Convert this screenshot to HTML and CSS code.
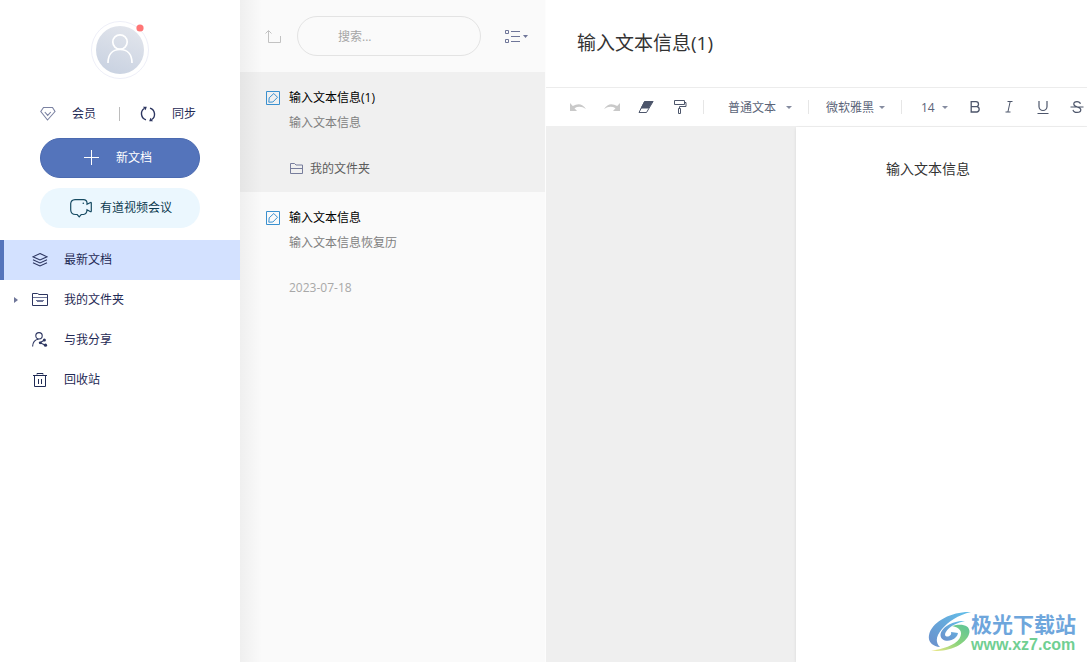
FILE: index.html
```html
<!DOCTYPE html>
<html lang="zh-CN">
<head>
<meta charset="utf-8">
<title>输入文本信息(1)</title>
<link rel="stylesheet" href="styles.css">
</head>
<body>
<div class="app">
  <aside class="sidebar">
    <button class="avatar" aria-label="账号">
      <svg width="58" height="58" viewBox="0 0 58 58">
        <defs><linearGradient id="face" x1=".7" y1="0" x2=".3" y2="1"><stop offset="0" stop-color="#e2e5ec"/><stop offset="1" stop-color="#c9d2e1"/></linearGradient></defs>
        <circle cx="29" cy="29" r="28.5" fill="#fff" stroke="#eeeff8"/>
        <circle cx="29" cy="29" r="24" fill="url(#face)"/>
        <circle cx="29" cy="21" r="7.2" fill="none" stroke="#fff" stroke-width="1.7"/>
        <path d="M17 42C17 34 21 28.5 29 28.5S41 34 41 42" fill="none" stroke="#fff" stroke-width="1.7"/>
        <circle cx="49" cy="7" r="3.6" fill="#ff7676"/>
      </svg>
    </button>
    <div class="account">
      <button class="account-item">
        <svg width="16" height="16" viewBox="0 0 16 16" fill="none" stroke="#7b82a2" stroke-width="1.1"><path d="M3.5 1.5h9l2.5 4-7.5 8.500L.8 5.500zM4.800 6l2.900 3.400L10.800 6"/></svg>
        会员
      </button>
      <span class="account-rule"></span>
      <button class="account-item">
        <svg width="16" height="16" viewBox="0 0 16 16" fill="none" stroke="#2c3560" stroke-width="1.4"><path d="M6 13.800A6.300 6.300 0 0 1 4.300 2.500M10 2.200a6.300 6.300 0 0 1 1.700 11.300"/><path d="M3 .8h3.800L5.600 4.200zM13 15.200H9.200l1.200-3.400z" fill="#2c3560" stroke="none"/></svg>
        同步
      </button>
    </div>
    <button class="pill pill-new">
      <svg width="16" height="16" viewBox="0 0 16 16" stroke="#fff" fill="none"><path d="M0 7.500h15M7.500 0v15"/></svg>
      新文档
    </button>
    <button class="pill pill-meet">
      <svg width="22" height="20" viewBox="0 0 22 20" fill="none" stroke="#174b63" stroke-width="1.2"><path d="M5 1.600h8.500a3.500 3.500 0 0 1 3.500 3.200v1.500l3.500-1.800q.8-.2.800.6v8q0 .8-.8.600l-3.500-1.900q-.2 4.500-3.500 4.700h-2.300L9.200 18.800 7.200 16.500H5.500Q1 16.500.700 12V5.500Q1 2 5 1.600z"/><circle cx="13.300" cy="5.200" r=".8" fill="#174b63" stroke="none"/></svg>
      有道视频会议
    </button>
    <nav class="nav">
      <a class="nav-item nav-active" href="#recent"><span class="twist"></span>
        <svg width="16" height="16" viewBox="0 0 16 16" fill="none" stroke="#2c3560" stroke-width="1.1"><path d="M8 1.500 15 4.800 8 8 1 4.800zM1 7.800 8 11l7-3.200M1 10.800 8 14l7-3.200"/></svg>最新文档</a>
      <a class="nav-item" href="#folders"><span class="twist twist-shown"></span>
        <svg width="16" height="16" viewBox="0 0 16 16" fill="none" stroke="#2c3560"><path d="M.5 13.500v-12h5l1.500 1h8.500v11z"/><path d="M1 5.500h14M4 8.500h8M5 9.500h6" stroke="#6f7699"/></svg>我的文件夹</a>
      <a class="nav-item" href="#shared"><span class="twist"></span>
        <svg width="16" height="16" viewBox="0 0 16 16" fill="none" stroke="#2c3560" stroke-width="1.1"><circle cx="7" cy="3.800" r="3.200"/><path d="M.6 14.500C.8 10.500 2.500 7.500 6.500 7.200M8 10.800l4.500-2.800M8 10.800l5.500 2.400" /><circle cx="8.200" cy="10.800" r="1.400" fill="#2c3560" stroke="none"/><circle cx="12.400" cy="8" r="1.500" fill="#2c3560" stroke="none"/><circle cx="13.500" cy="13.200" r="1.600" fill="#2c3560" stroke="none"/></svg>与我分享</a>
      <a class="nav-item" href="#trash"><span class="twist"></span>
        <svg width="16" height="16" viewBox="0 0 16 16" fill="none" stroke="#1f2a55"><path d="M1 3.500h14M5 2.500V1.500h6v1M2.500 4v10.500h11V4M6.500 7v5M9.500 7v5"/></svg>回收站</a>
    </nav>
  </aside>

  <section class="notes">
    <div class="notes-bar">
      <button class="icon-btn" aria-label="返回上级"><svg width="18" height="16" viewBox="0 0 18 16" fill="none" stroke="#c2c2c2"><path d="M1.500 5.500l3-3 3 3M4.500 3v11.500h12V8"/></svg></button>
      <input class="search" type="search" placeholder="搜索..." aria-label="搜索">
      <button class="icon-btn" aria-label="列表视图"><svg width="24" height="16" viewBox="0 0 24 16" fill="none" stroke="#6f7699"><path d="M.5 2.500h3v3h-3zM.5 11.500h3v3h-3zM6 3.500h9M6 8.500h9M6 13.500h9"/><path d="M18 7h5l-2.500 3z" fill="#6f7699" stroke="none"/></svg></button>
    </div>
    <article class="note note-active">
      <svg class="note-icon" width="14" height="14" viewBox="0 0 14 14" fill="none" stroke="#3a90cf"><path d="M.5.500h13v13H.5z"/><path d="M2.800 11.200l.4-4.400L7.800 2.500l3.700 3.800-4.600 4.700z"/></svg>
      <div class="note-body">
        <h2 class="note-title">输入文本信息(1)</h2>
        <p class="note-text">输入文本信息</p>
        <p class="note-foot note-folder"><svg width="14" height="12" viewBox="0 0 14 12" fill="none" stroke="#777d9c"><path d="M1.500 10.500V.500h4l1.500 1.500h6.500v8.500zM1.500 5.500h12"/></svg>我的文件夹</p>
      </div>
    </article>
    <article class="note">
      <svg class="note-icon" width="14" height="14" viewBox="0 0 14 14" fill="none" stroke="#3a90cf"><path d="M.5.500h13v13H.5z"/><path d="M2.800 11.200l.4-4.400L7.800 2.500l3.700 3.800-4.600 4.700z"/></svg>
      <div class="note-body">
        <h2 class="note-title">输入文本信息</h2>
        <p class="note-text">输入文本信息恢复历</p>
        <p class="note-foot">2023-07-18</p>
      </div>
    </article>
  </section>

  <main class="editor">
    <h1 class="doc-title">输入文本信息(1)</h1>
    <div class="toolbar">
      <button class="tool" aria-label="撤销"><svg width="18" height="16" viewBox="0 0 18 16"><path d="M1 4v8h7L5.500 9.200Q11 6 17 10 12 2.500 3.800 7z" fill="#c9c9c9"/></svg></button>
      <button class="tool" aria-label="重做"><svg width="18" height="16" viewBox="0 0 18 16"><path d="M17 4v8h-7l2.500-2.800Q7 6 1 10 6 2.500 14.200 7z" fill="#c9c9c9"/></svg></button>
      <button class="tool" aria-label="清除格式"><svg width="16" height="14" viewBox="0 0 16 14"><path d="M6.500 1H15.500l-5 7.500H2.500z" fill="#4d566b"/><path d="M6.500 1.500 1 12.500h7.500l6.500-11" fill="none" stroke="#4d566b"/></svg></button>
      <button class="tool" aria-label="格式刷"><svg width="14" height="16" viewBox="0 0 14 16" fill="none" stroke="#4d566b"><path d="M1.500 1.500h10v4h-10zM11.500 3.500h1.500v4H6.500v2M5.500 9.500h2v5h-2z"/></svg></button>
      <span class="rule rule-gap"></span>
      <div class="pick pick-style"><select aria-label="段落样式"><option>普通文本</option></select></div>
      <span class="rule"></span>
      <div class="pick pick-font"><select aria-label="字体"><option>微软雅黑</option></select></div>
      <span class="rule"></span>
      <div class="pick pick-size"><select aria-label="字号"><option>14</option></select></div>
      <button class="tool" aria-label="加粗"><svg width="12" height="14" viewBox="0 0 12 14" fill="none" stroke="#4d566b" stroke-width="1.300"><path d="M2.200 1.700h4.800a2.500 2.500 0 0 1 0 5H2.200zM2.200 6.700H8a2.700 2.700 0 0 1 0 5.300H2.200z"/></svg></button>
      <button class="tool" aria-label="斜体"><svg width="12" height="14" viewBox="0 0 12 14" fill="none" stroke="#4d566b"><path d="M4.500 1.500H9.500M2.500 12H7.500M7.200 1.500 4.900 12"/></svg></button>
      <button class="tool" aria-label="下划线"><svg width="12" height="16" viewBox="0 0 12 16" fill="none" stroke="#4d566b" stroke-width="1.200"><path d="M2 2v5.500a4 4 0 0 0 8 0V2M.5 14.500h11"/></svg></button>
      <button class="tool" aria-label="删除线"><svg width="14" height="14" viewBox="0 0 14 14" fill="none" stroke="#4d566b" stroke-width="1.200"><path d="M10.500 3.800Q9.800 1.600 7 1.600 3.800 1.600 3.800 4q0 2 3.200 2.800 3.800 1 3.800 3 0 2.600-3.700 2.600Q3.500 12.400 3 9.800M.5 7h13"/></svg></button>
    </div>
    <div class="canvas">
      <div class="page"><p class="page-text">输入文本信息</p></div>
    </div>
  </main>

  <div class="watermark">
    <svg width="43" height="42" viewBox="0 0 43 42">
      <defs>
        <linearGradient id="blue" x1="1" y1="0" x2="0" y2="1"><stop offset="0" stop-color="#62c0ea"/><stop offset="1" stop-color="#6b8fcb"/></linearGradient>
        <linearGradient id="green" x1="1" y1="0" x2="0" y2="1"><stop offset="0" stop-color="#5bc49a"/><stop offset=".5" stop-color="#8ad37d"/><stop offset="1" stop-color="#f0e884"/></linearGradient>
      </defs>
      <path d="M43 1C26 0 6 9 1.500 22c-2.500 8 2 13 10.500 14-5-5-4-11 2-18C20 11 30 4 43 1z" fill="url(#blue)"/>
      <path d="M37 10C26 9 13 16 12.500 24c0 5 6 7 11 5 4-1.500 6-4 6.500-7l-7-1c1 3-2 5-4.500 4.500C14 24 21 13 37 10z" fill="url(#blue)"/>
      <path d="M24 15c9-3 18-1 17.500 6C40 32 22 42 3 39.500c11-1 24-5 28.500-12 4-7 0-11-7.500-12.500z" fill="url(#green)"/>
    </svg>
    <div class="mark-text"><span class="mark-name">极光下载站</span><span class="mark-site">www.xz7.com</span></div>
  </div>
</div>
</body>
</html>
```
FILE: styles.css
```css
* { box-sizing: border-box; }
body, h1, h2, p { margin: 0; font-weight: 400; }
body {
  font: 12px/20px "Open Sans", "Noto Sans CJK SC", sans-serif;
  color: #1f2a55;
  background: #fff;
}
button, select, input { font: inherit; color: inherit; border: 0; background: none; padding: 0; margin: 0; }
svg { display: block; flex: none; }

.app { position: relative; display: flex; min-height: 100vh; overflow: hidden; }

.sidebar { flex: none; width: 240px; display: flex; flex-direction: column; align-items: center; padding-top: 21px; }
.account { display: flex; align-self: stretch; align-items: center; gap: 20px; height: 30px; margin: 20px 0 9px; padding-left: 40px; }
.account-item { display: flex; align-items: center; gap: 16px; }
.account-rule { width: 1px; height: 14px; margin-left: 3px; background: #bcbcbc; }
.pill { display: flex; align-items: center; width: 160px; height: 40px; border-radius: 20px; }
.pill-new { gap: 16px; padding-left: 43px; background: #5474bb; color: #fff; border: 1px solid #4b6ab0; }
.pill-meet { gap: 8px; margin-top: 10px; padding-left: 30px; background: #ebf7fe; color: #0c3a50; }
.nav { align-self: stretch; margin-top: 12px; }
.nav-item { display: flex; align-items: center; height: 40px; color: inherit; text-decoration: none; border-left: 4px solid transparent; }
.nav-item svg { margin-right: 16px; }
.nav-active { background: #d3e1ff; border-color: #5474bb; }
.twist { width: 4px; margin: 0 14px 0 10px; }
.twist-shown { border: 3px solid transparent; border-left: 4px solid #6f7699; border-right: 0; }

.notes {
  flex: none;
  width: 306px;
  border-right: 1px solid #fdfdfd;
  background: linear-gradient(to right, #0000000b, #00000000 22px) #fafafa;
}
.notes-bar { display: flex; align-items: center; gap: 16px; height: 72px; padding: 0 16px 0 24px; }
.icon-btn:last-child { margin-left: 8px; }
.search {
  flex: 1;
  min-width: 0;
  height: 40px;
  margin-left: -1px;
  padding: 0 40px;
  border: 1px solid #e3e3e3;
  border-radius: 20px;
}
.search::placeholder { color: #a6a6a6; }
.note { display: flex; gap: 9px; height: 120px; padding: 16px 26px; }
.note-active { background: #0000000a; }
.note-icon { margin-top: 3px; }
.note-title { font-size: 12px; line-height: 20px; color: #000; }
.note-text { margin-top: 5px; color: #808080; }
.note-foot { margin-top: 25px; color: #a8a8a8; }
.note-folder { display: flex; align-items: center; gap: 7px; margin-top: 26px; color: #5c5c5c; }

.editor { flex: 1; min-width: 0; display: flex; flex-direction: column; }
.doc-title { height: 88px; padding: 29px 31px; border-bottom: 1px solid #ececec; font-size: 19px; line-height: 28px; color: #333; }
.toolbar { display: flex; align-items: center; height: 39px; padding-left: 15px; border-bottom: 1px solid #efefef; overflow: hidden; color: #5b6478; }
.tool { flex: none; display: flex; align-items: center; justify-content: center; width: 34px; height: 34px; }
.rule { flex: none; width: 1px; height: 14px; background: #e6e6e6; }
.rule-gap { margin-left: 6px; }
.pick { flex: none; position: relative; padding-top: 1px; }
.pick select { display: block; appearance: none; width: 100%; height: 20px; }
.pick::after {
  content: "";
  position: absolute;
  top: 9px;
  right: 16px;
  border: 3px solid transparent;
  border-top: 3px solid #858ca0;
  border-bottom: 0;
  pointer-events: none;
}
.pick-style { width: 104px; padding-left: 24px; }
.pick-font { width: 92px; padding-left: 17px; }
.pick-size { width: 56px; padding-left: 19px; }
.pick-size::after { right: 10px; }
.canvas { flex: 1; display: flex; padding-left: 250px; background: #efefef; }
.page { flex: 1; padding: 30px 90px; background: #fff; box-shadow: 0 1px 3px #00000018; }
.page-text { font-size: 14px; line-height: 24px; color: #333; white-space: nowrap; }

.watermark { position: absolute; right: 11px; bottom: 8px; display: flex; align-items: center; pointer-events: none; }
.mark-text { display: flex; flex-direction: column; }
.mark-name { font: 700 21px/26px "Noto Sans CJK SC", sans-serif; color: #6ea6dc; }
.mark-site { font: 700 16px/18px "Liberation Sans", sans-serif; color: #70cf92; }
```
